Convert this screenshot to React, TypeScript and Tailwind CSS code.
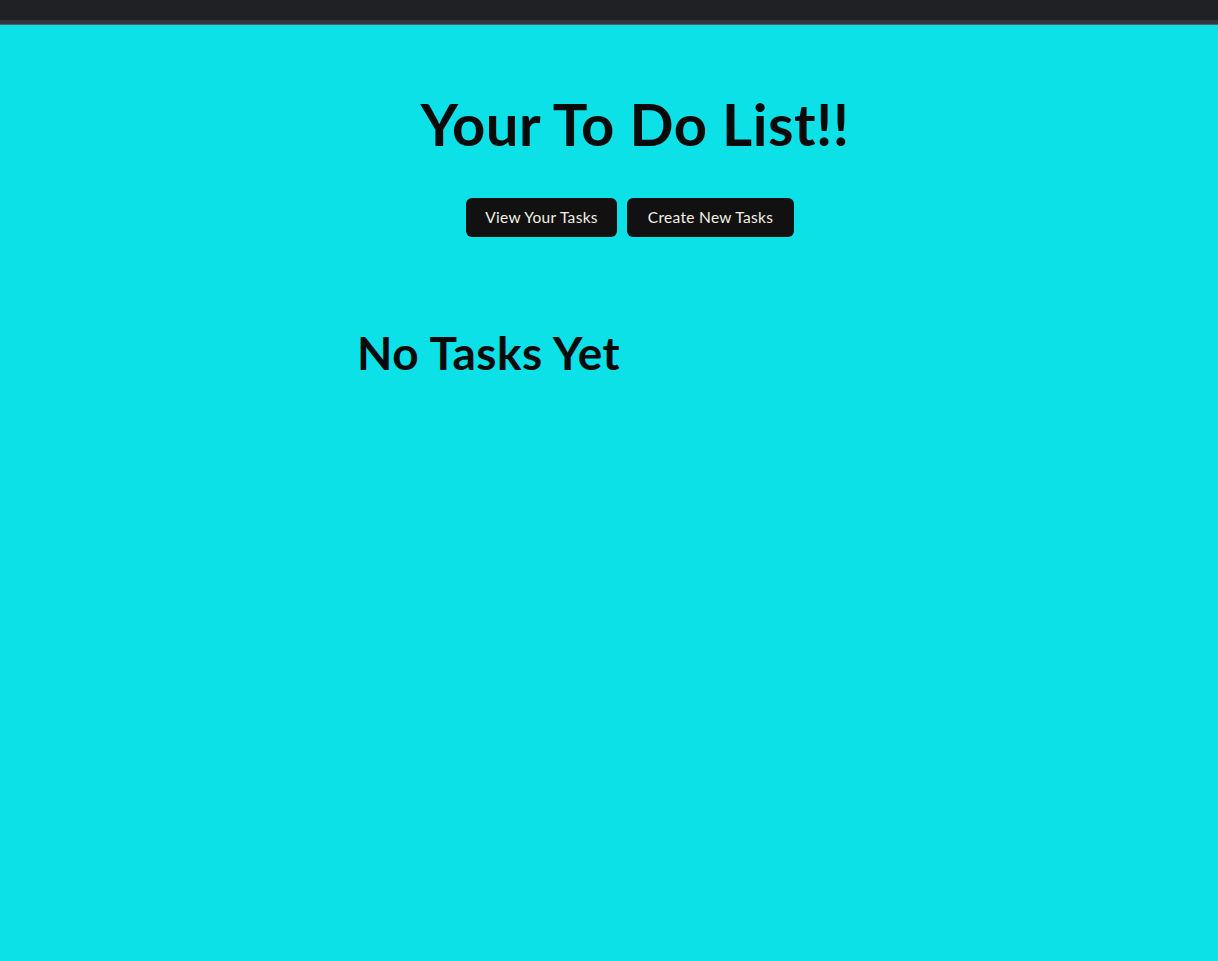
export default function App() {
  return (
    <div className="min-h-screen w-full flex flex-col bg-[#0be1e7] font-['Lato','Noto_Sans',sans-serif] text-[#0a0a0a]">
      {/* browser-ish top strip */}
      <div className="h-[20px] bg-[#202125]" />
      <div className="h-[4px] bg-[#35363b]" />
      <div className="h-px bg-[#5a5b60]" />

      <main className="flex flex-col items-center pl-[52px] pt-[70px]">
        <h1 className="text-[58px] font-bold leading-none tracking-[0.5px]">Your To Do List!!</h1>

        <div className="flex gap-[10px] mt-[45px] mr-[10px]">
          <button className="h-[39px] w-[151px] rounded-[6px] bg-[#111111] text-[15.5px] tracking-[0.3px] text-[#f3f1e4]">
            View Your Tasks
          </button>
          <button className="h-[39px] w-[167px] rounded-[6px] bg-[#111111] text-[15.5px] tracking-[0.3px] text-[#f3f1e4]">
            Create New Tasks
          </button>
        </div>

        <section className="w-[556px] mt-[93px]">
          <h2 className="text-[46px] font-bold leading-none tracking-[0.5px]">No Tasks Yet</h2>
        </section>
      </main>
    </div>
  );
}
